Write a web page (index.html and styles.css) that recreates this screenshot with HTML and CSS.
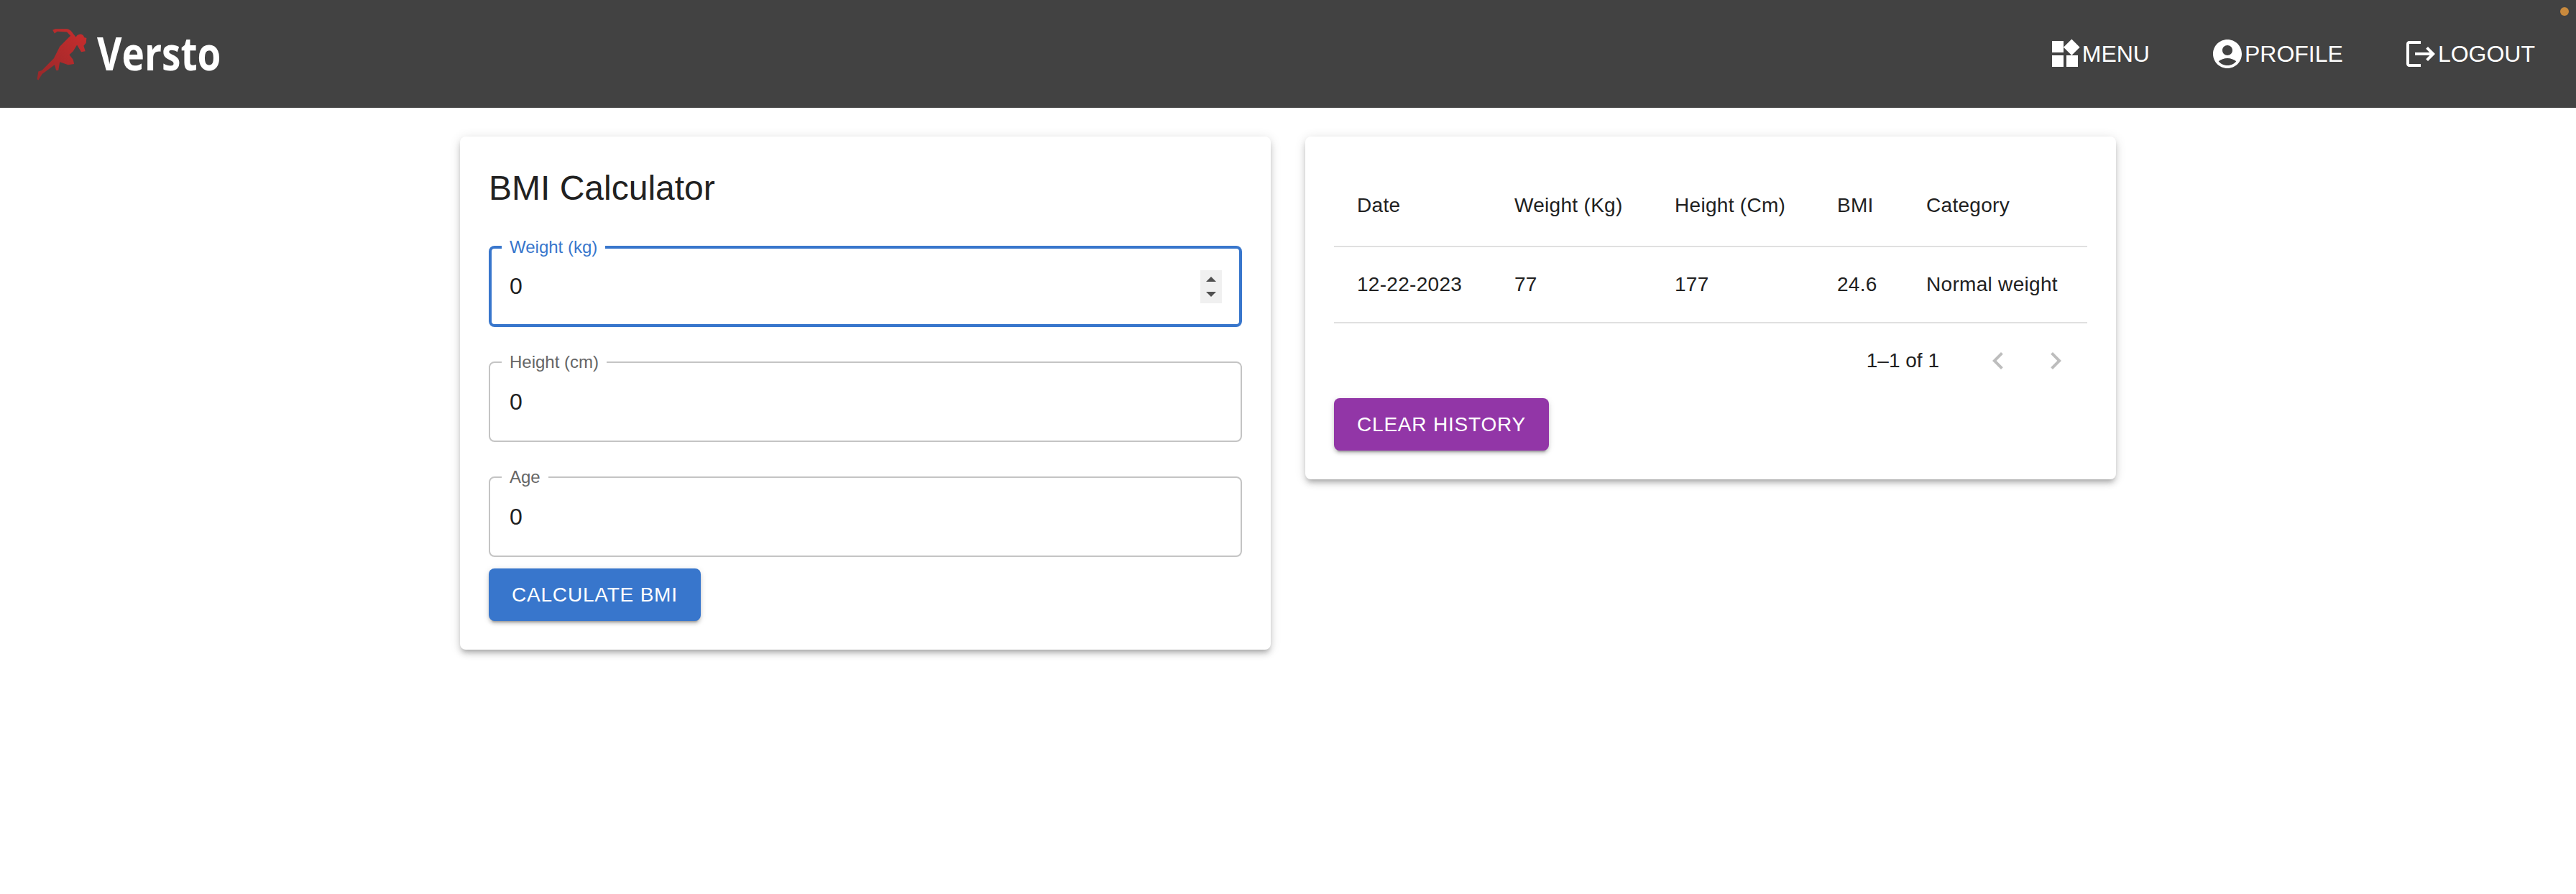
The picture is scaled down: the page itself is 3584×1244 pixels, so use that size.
FILE: index.html
```html
<!DOCTYPE html>
<html lang="en">
<head>
  <meta charset="UTF-8">
  <meta name="viewport" content="width=device-width, initial-scale=1.0">
  <title>BMI Calculator</title>
  <link rel="stylesheet" href="styles.css">
</head>
<body>

  <header class="topbar">
    <a class="logo" href="#">
      <svg class="logo-icon" viewBox="150 105 220 225">
        <defs>
          <linearGradient id="runner" x1="1" y1="0" x2="0" y2="1">
            <stop offset="0" stop-color="#c92d2d"/>
            <stop offset="1" stop-color="#98282a"/>
          </linearGradient>
        </defs>
        <path fill="url(#runner)" d="M220 116 L232 111 L280 111 Q296 114 305 130 L318 146 Q322 134 337 133 Q350 135 352 147 L362 150 L360 170 L350 182 L357 205 L340 208 L322 178 L306 205 L290 220 L306 240 L310 258 L285 262 L250 250 L244 285 L235 285 L228 262 L176 300 L160 326 L155 322 L160 290 L175 285 L225 235 L250 185 L285 150 L295 140 L280 124 L240 122 L228 130 Z"/>
      </svg>
      <span class="logo-text">Versto</span>
    </a>
    <nav class="nav">
      <a class="nav-link" href="#">
        <svg class="nav-icon" viewBox="0 0 24 24"><path d="M13 13v8h8v-8h-8zM3 21h8v-8H3v8zM3 3v8h8V3H3zm13.66-1.31L11 7.34 16.66 13l5.66-5.66-5.66-5.65z"/></svg>
        Menu
      </a>
      <a class="nav-link" href="#">
        <svg class="nav-icon" viewBox="0 0 24 24"><path d="M12 2C6.48 2 2 6.48 2 12s4.48 10 10 10 10-4.48 10-10S17.52 2 12 2zm0 4c1.93 0 3.5 1.57 3.5 3.5S13.93 13 12 13s-3.5-1.57-3.5-3.5S10.07 6 12 6zm0 14c-2.03 0-4.43-.82-6.14-2.88C7.55 15.8 9.68 15 12 15s4.45.8 6.14 2.12C16.43 19.18 14.03 20 12 20z"/></svg>
        Profile
      </a>
      <a class="nav-link" href="#">
        <svg class="nav-icon" viewBox="0 0 24 24"><path d="m17 7-1.41 1.41L18.17 11H8v2h10.17l-2.58 2.58L17 17l5-5zM4 5h8V3H4c-1.1 0-2 .9-2 2v14c0 1.1.9 2 2 2h8v-2H4V5z"/></svg>
        Logout
      </a>
    </nav>
    <span class="status-dot"></span>
  </header>

  <main class="content">
    <!-- Calculator form -->
    <section class="card">
      <h1 class="card-title">BMI Calculator</h1>
      <form class="bmi-form">
        <div class="field field-active">
          <label class="field-label" for="weight">Weight (kg)</label>
          <input class="field-input" type="number" id="weight" value="0">
          <span class="spinner">
            <span class="spinner-up"></span>
            <span class="spinner-down"></span>
          </span>
        </div>
        <div class="field">
          <label class="field-label" for="height">Height (cm)</label>
          <input class="field-input" type="number" id="height" value="0">
        </div>
        <div class="field">
          <label class="field-label" for="age">Age</label>
          <input class="field-input" type="number" id="age" value="0">
        </div>
        <button class="btn btn-blue" type="submit">Calculate BMI</button>
      </form>
    </section>

    <!-- History table -->
    <section class="card">
      <table class="history">
        <thead>
          <tr>
            <th>Date</th>
            <th>Weight (Kg)</th>
            <th>Height (Cm)</th>
            <th>BMI</th>
            <th>Category</th>
          </tr>
        </thead>
        <tbody>
          <tr>
            <td>12-22-2023</td>
            <td>77</td>
            <td>177</td>
            <td>24.6</td>
            <td>Normal weight</td>
          </tr>
        </tbody>
      </table>
      <div class="pagination">
        <span class="page-count">1–1 of 1</span>
        <span class="page-btn">
          <svg class="page-icon" viewBox="0 0 24 24"><path d="M15.41 16.59 10.83 12l4.58-4.59L14 6l-6 6 6 6z"/></svg>
        </span>
        <span class="page-btn">
          <svg class="page-icon" viewBox="0 0 24 24"><path d="M8.59 16.59 13.17 12 8.59 7.41 10 6l6 6-6 6z"/></svg>
        </span>
      </div>
      <button class="btn btn-purple" type="button">Clear History</button>
    </section>
  </main>

</body>
</html>
```

FILE: styles.css
```css
/* General page */
body {
  margin: 0;
  background: #fff;
  color: #212121;
  font-family: "Liberation Sans", Arial, sans-serif;
  min-height: 1244px;
}

/* Top bar */
.topbar {
  position: relative;
  display: flex;
  justify-content: space-between;
  align-items: center;
  height: 150px;
  padding: 0 57px 0 50px;
  background: #424242;
  color: #fff;
}

.logo {
  display: flex;
  align-items: center;
  gap: 12px;
  color: #fff;
  text-decoration: none;
}

.logo-icon {
  width: 73px;
  height: 75px;
}

.logo-text {
  padding-bottom: 2px;
  font-family: "Open Sans", sans-serif;
  font-size: 64px;
  font-weight: 700;
  line-height: 1;
  transform: scaleX(0.83);
  transform-origin: left center;
}

.nav {
  display: flex;
  gap: 84px;
}

.nav-link {
  display: flex;
  align-items: center;
  color: #fff;
  font-size: 32px;
  line-height: 52px;
  text-decoration: none;
  text-transform: uppercase;
}

.nav-icon {
  width: 48px;
  height: 48px;
  fill: #fff;
}

.status-dot {
  position: absolute;
  top: 10px;
  right: 10px;
  width: 12px;
  height: 12px;
  border-radius: 50%;
  background: #c98a3d;
}

/* Cards */
.content {
  display: flex;
  justify-content: center;
  align-items: flex-start;
  gap: 48px;
  padding-top: 40px;
}

.card {
  width: 1128px;
  box-sizing: border-box;
  padding: 40px;
  background: #fff;
  border-radius: 8px;
  box-shadow: 0 6px 6px -4px rgba(0, 0, 0, 0.2), 0 6px 8px 0 rgba(0, 0, 0, 0.14), 0 2px 16px 0 rgba(0, 0, 0, 0.12);
}

.card-title {
  margin: 0 0 49px;
  font-size: 48px;
  font-weight: 400;
  line-height: 64px;
}

/* Form */
.bmi-form {
  display: flex;
  flex-direction: column;
  align-items: flex-start;
  gap: 48px;
}

.field {
  position: relative;
  flex: none;
  width: 100%;
  height: 112px;
  box-sizing: border-box;
  border: 2px solid #c4c4c4;
  border-radius: 8px;
}

.field-active {
  height: 113px;
  margin-top: -1px;
  border: 4px solid #3876cc;
}

.field-label {
  position: absolute;
  top: -15px;
  left: 16px;
  padding: 0 11px;
  background: #fff;
  color: #666;
  font-size: 24px;
  line-height: 28px;
}

.field-active .field-label {
  top: -16px;
  left: 14px;
  color: #3876cc;
}

.field-input {
  display: block;
  width: 100%;
  height: 100%;
  box-sizing: border-box;
  padding: 0 27px;
  border: none;
  outline: none;
  background: transparent;
  color: #212121;
  font-family: inherit;
  font-size: 32px;
  appearance: textfield;
}

.field-active .field-input {
  padding: 0 25px;
}

.spinner {
  position: absolute;
  top: 30px;
  right: 24px;
  display: flex;
  flex-direction: column;
  justify-content: center;
  align-items: center;
  gap: 14px;
  width: 30px;
  height: 46px;
  background: #f0f0f0;
}

.spinner-up,
.spinner-down {
  width: 0;
  height: 0;
  border-left: 7px solid transparent;
  border-right: 7px solid transparent;
}

.spinner-up {
  border-bottom: 7px solid #505050;
}

.spinner-down {
  border-top: 7px solid #505050;
}

/* Buttons */
.btn {
  display: block;
  padding: 12px 32px;
  border: none;
  border-radius: 8px;
  color: #fff;
  font-family: inherit;
  font-size: 28px;
  line-height: 49px;
  letter-spacing: 0.8px;
  text-transform: uppercase;
  box-shadow: 0 6px 2px -4px rgba(0, 0, 0, 0.2), 0 4px 4px 0 rgba(0, 0, 0, 0.14), 0 2px 10px 0 rgba(0, 0, 0, 0.12);
  cursor: pointer;
}

.bmi-form .btn {
  margin-top: -32px;
}

.btn-blue {
  background: #3876cc;
}

.btn-purple {
  background: #9236a7;
}

/* History table */
.history {
  width: 100%;
  table-layout: fixed;
  border-collapse: collapse;
  font-size: 28px;
  letter-spacing: 0.3px;
}

.history th,
.history td {
  box-sizing: border-box;
  padding: 32px;
  border-bottom: 2px solid #e0e0e0;
  font-weight: 400;
  text-align: left;
}

.history th {
  line-height: 48px;
}

.history td {
  line-height: 40px;
  white-space: nowrap;
}

.history th:nth-child(1) { width: 219px; }
.history th:nth-child(2) { width: 223px; }
.history th:nth-child(3) { width: 226px; }
.history th:nth-child(4) { width: 124px; }

/* Pagination */
.pagination {
  display: flex;
  justify-content: flex-end;
  align-items: center;
  height: 104px;
  padding-right: 4px;
  font-size: 28px;
  line-height: 40px;
}

.page-count {
  margin-right: 42px;
}

.page-btn {
  display: flex;
  padding: 16px;
}

.page-icon {
  width: 48px;
  height: 48px;
  fill: #bdbdbd;
}
```
